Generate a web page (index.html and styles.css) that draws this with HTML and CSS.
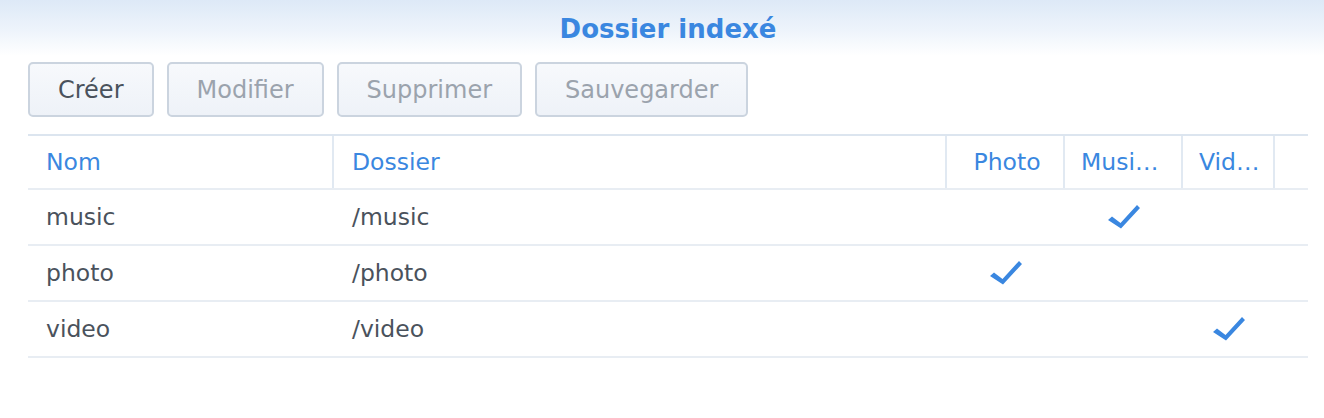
FILE: index.html
```html
<!DOCTYPE html>
<html lang="fr">
<head>
<meta charset="utf-8">
<title>Dossier indexé</title>
<link rel="stylesheet" href="styles.css">
</head>
<body>
<div class="header"><h1 class="title">Dossier indexé</h1></div>
<div class="toolbar">
  <button class="btn">Créer</button>
  <button class="btn disabled">Modifier</button>
  <button class="btn disabled">Supprimer</button>
  <button class="btn disabled">Sauvegarder</button>
</div>
<div class="grid">
  <div class="row head">
    <div class="cell hcell">Nom</div>
    <div class="cell hcell">Dossier</div>
    <div class="cell hcell center">Photo</div>
    <div class="cell hcell center">Musique</div>
    <div class="cell hcell center">Vidéo</div>
    <div class="cell filler"></div>
  </div>
  <div class="row">
    <div class="cell">music</div>
    <div class="cell">/music</div>
    <div class="cell center"></div>
    <div class="cell center"><svg class="check" viewBox="0 0 32 24"><polygon points="0,15 4,11.5 12.5,18 29,0 32,3 13,23.5"/></svg></div>
    <div class="cell center"></div>
    <div class="cell"></div>
  </div>
  <div class="row">
    <div class="cell">photo</div>
    <div class="cell">/photo</div>
    <div class="cell center"><svg class="check" viewBox="0 0 32 24"><polygon points="0,15 4,11.5 12.5,18 29,0 32,3 13,23.5"/></svg></div>
    <div class="cell center"></div>
    <div class="cell center"></div>
    <div class="cell"></div>
  </div>
  <div class="row">
    <div class="cell">video</div>
    <div class="cell">/video</div>
    <div class="cell center"></div>
    <div class="cell center"></div>
    <div class="cell center"><svg class="check" viewBox="0 0 32 24"><polygon points="0,15 4,11.5 12.5,18 29,0 32,3 13,23.5"/></svg></div>
    <div class="cell"></div>
  </div>
</div>
</body>
</html>
```
FILE: styles.css
```css
html, body {
  margin: 0;
  padding: 0;
  background: #ffffff;
  font-family: "DejaVu Sans", Verdana, sans-serif;
}
.header {
  height: 56px;
  background: linear-gradient(to bottom, #dde9f7 0%, #eef4fb 55%, #ffffff 100%);
  display: flex;
  align-items: center;
  justify-content: center;
}
.title {
  margin: 0;
  padding-left: 12px;
  font-size: 26px;
  font-weight: bold;
  color: #3a87e0;
  line-height: 1;
  margin-top: 2px;
}
.toolbar {
  display: flex;
  gap: 13px;
  padding-left: 28px;
  margin-top: 6px;
}
.btn {
  height: 55px;
  padding: 0 28px;
  border: 2px solid #cbd4df;
  border-radius: 5px;
  background: linear-gradient(to bottom, #f7f9fc, #eef2f8);
  font-family: "DejaVu Sans", Verdana, sans-serif;
  font-size: 24px;
  color: #4a525c;
  cursor: pointer;
}
.btn.disabled {
  color: #9ba3ad;
}
.grid {
  margin: 17px 0 0 28px;
  width: 1280px;
  border-top: 2px solid #dce5ef;
}
.row {
  display: grid;
  grid-template-columns: 306px 613px 118px 118px 92px 33px;
  height: 56px;
  border-bottom: 2px solid #e8edf3;
  box-sizing: border-box;
}
.row.head {
  height: 54px;
}
.cell {
  display: flex;
  align-items: center;
  padding: 0 18px;
  font-size: 23.5px;
  color: #4a525c;
  white-space: nowrap;
  overflow: hidden;
  min-width: 0;
}
.hcell {
  display: block;
  line-height: 52px;
  color: #3a87e0;
  border-right: 2px solid #e1e9f2;
  text-overflow: ellipsis;
  padding: 0 17px 0 18px;
}
.hcell.center {
  text-align: center;
  padding: 0 12px 0 16px;
}
.cell.center {
  justify-content: center;
}
.filler {
  padding: 0;
}
.check {
  width: 32px;
  height: 24px;
  fill: #3a87e0;
  flex: none;
}
```
